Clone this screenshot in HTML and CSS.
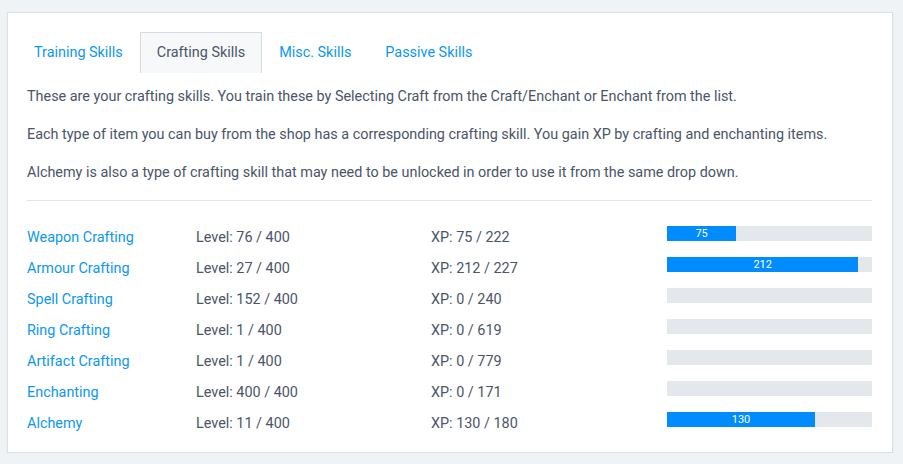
FILE: index.html
```html
<!DOCTYPE html>
<html>
<head>
<meta charset="utf-8">
<link rel="stylesheet" href="styles.css">
</head>
<body>
<div class="card">
  <ul class="tabs">
    <li class="tab"><a href="#">Training Skills</a></li>
    <li class="tab active"><a href="#">Crafting Skills</a></li>
    <li class="tab"><a href="#">Misc. Skills</a></li>
    <li class="tab"><a href="#">Passive Skills</a></li>
  </ul>
  <div class="content">
    <p>These are your crafting skills. You train these by Selecting Craft from the Craft/Enchant or Enchant from the list.</p>
    <p>Each type of item you can buy from the shop has a corresponding crafting skill. You gain XP by crafting and enchanting items.</p>
    <p>Alchemy is also a type of crafting skill that may need to be unlocked in order to use it from the same drop down.</p>
    <hr class="divider">
    <div class="skills">
      <div class="row"><a href="#" class="name">Weapon Crafting</a><span>Level: 76 / 400</span><span>XP: 75 / 222</span><div class="bar"><div class="fill" style="width:33.78%">75</div></div></div>
      <div class="row"><a href="#" class="name">Armour Crafting</a><span>Level: 27 / 400</span><span>XP: 212 / 227</span><div class="bar"><div class="fill" style="width:93.39%">212</div></div></div>
      <div class="row"><a href="#" class="name">Spell Crafting</a><span>Level: 152 / 400</span><span>XP: 0 / 240</span><div class="bar"></div></div>
      <div class="row"><a href="#" class="name">Ring Crafting</a><span>Level: 1 / 400</span><span>XP: 0 / 619</span><div class="bar"></div></div>
      <div class="row"><a href="#" class="name">Artifact Crafting</a><span>Level: 1 / 400</span><span>XP: 0 / 779</span><div class="bar"></div></div>
      <div class="row"><a href="#" class="name">Enchanting</a><span>Level: 400 / 400</span><span>XP: 0 / 171</span><div class="bar"></div></div>
      <div class="row"><a href="#" class="name">Alchemy</a><span>Level: 11 / 400</span><span>XP: 130 / 180</span><div class="bar"><div class="fill" style="width:72.22%">130</div></div></div>
    </div>
  </div>
</div>
</body>
</html>
```
FILE: styles.css
```css
html, body {
  margin: 0;
  padding: 0;
  background: #eff3f6;
}
body {
  padding: 12px 10px 0 7px;
  font-family: Roboto, "Liberation Sans", sans-serif;
  font-size: 14.4px;
  color: #4a5568;
}
.card {
  background: #fff;
  border: 1px solid #dcdfe3;
  box-shadow: 0 1px 2px rgba(0,0,0,0.06);
  width: 884px;
  height: 439px;
  box-sizing: content-box;
}
.tabs {
  list-style: none;
  margin: 19px 0 0 9px;
  padding: 0;
  display: flex;
}
.tab a {
  display: block;
  padding: 0 16px;
  height: 40px;
  line-height: 40px;
  color: #0c97f0;
  text-decoration: none;
  border: 1px solid transparent;
  border-bottom: none;
}
.tab.active a {
  color: #4a5568;
  background: #f7f8fa;
  border-color: #d8dce0;
}
.content {
  padding: 5px 20px 0 19px;
}
.content p {
  margin: 8px 0 16px;
  line-height: 22px;
}
.content p + p { margin-top: 0; }
.divider {
  border: none;
  border-top: 1px solid #e2e5e8;
  margin: 2px 0 0;
}
.skills {
  padding-top: 13px;
}
.row {
  display: grid;
  grid-template-columns: 169px 235px 236px 205px;
  align-items: center;
  height: 31px;
}
.row span, .row .name {
  line-height: 31px;
  padding-top: 8px;
}
.name {
  color: #0c97f0;
  text-decoration: none;
}
.bar {
  height: 15px;
  background: #e4e7eb;
  display: flex;
}
.fill {
  background: #008cff;
  color: #fff;
  font-size: 11px;
  line-height: 15px;
  text-align: center;
}
```
